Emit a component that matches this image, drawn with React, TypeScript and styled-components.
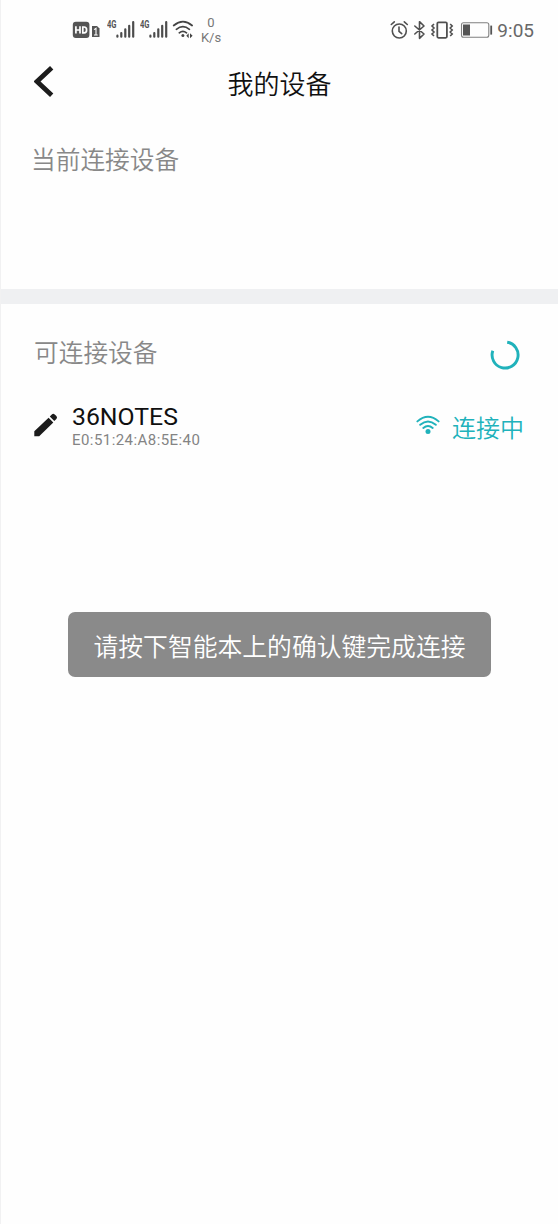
import React from "react";
import styled, { createGlobalStyle } from "styled-components";

const GlobalStyle = createGlobalStyle`
  * { box-sizing: border-box; }
  body { margin: 0; background: #fefefe; }
`;

const cjk = `"Noto Sans CJK SC", sans-serif`;
const teal = "#20b2bb";

const Screen = styled.main`
  width: 558px;
  height: 1224px;
  display: flex;
  flex-direction: column;
  background: #fefefe;
  border-left: 1px solid #f1f1f2;
  font-family: Roboto, ${cjk};
  position: relative;
  overflow: hidden;
`;

const StatusBar = styled.div`
  height: 56px;
  padding: 0 24px 0 71px;
  display: flex;
  justify-content: space-between;
  align-items: flex-start;
  color: #555;
  svg { display: block; flex: none; }
`;

const StatusGroup = styled.div<{ $top: number }>`
  display: flex;
  align-items: flex-start;
  padding-top: ${(p) => p.$top}px;
`;

const WifiSlot = styled.div`
  margin-left: 4px;
`;

const Speed = styled.div`
  width: 24px;
  margin: -5px 0 0 5px;
  font-size: 13px;
  line-height: 15px;
  text-align: center;
  color: #777;
`;

const Clock = styled.div`
  margin-left: 4px;
  padding-top: 1px;
  font-size: 19px;
  line-height: 22px;
  color: #686868;
`;

const Header = styled.header`
  height: 54px;
  padding: 0 33px;
  display: grid;
  grid-template-columns: 60px 1fr 60px;
  align-items: center;
`;

const BackButton = styled.button`
  width: 24px;
  height: 34px;
  margin-bottom: 4px;
  padding: 0;
  border: 0;
  background: none;
  svg { display: block; }
`;

const Title = styled.h1`
  margin: 0;
  text-align: center;
  font: 350 26px/36px ${cjk};
  color: #101010;
`;

const Section = styled.section<{ $height?: number; $top: number; $left: number }>`
  height: ${(p) => (p.$height ? `${p.$height}px` : "auto")};
  padding: ${(p) => p.$top}px 34px 0 ${(p) => p.$left}px;
`;

const SectionHead = styled.div`
  display: flex;
  justify-content: space-between;
  align-items: center;
  height: 36px;
`;

const SectionTitle = styled.h2`
  margin: 0;
  font: 350 24.7px/36px ${cjk};
  color: #888;
`;

const Divider = styled.div`
  height: 15px;
  background: #eff0f2;
`;

const Spinner = styled.svg`
  display: block;
  margin: 7px 4px 0 0;
`;

const DeviceRow = styled.div`
  margin-top: 31px;
  display: flex;
  align-items: center;
  height: 50px;
`;

const DeviceInfo = styled.div`
  margin-left: 14px;
  padding-top: 2px;
  flex: 1;
`;

const DeviceName = styled.div`
  font-size: 24.8px;
  line-height: 27px;
  color: #101010;
`;

const DeviceAddress = styled.div`
  margin-top: 1px;
  font-size: 15px;
  line-height: 18px;
  letter-spacing: 0.44px;
  color: #848484;
`;

const DeviceState = styled.div`
  display: flex;
  align-items: center;
  gap: 12px;
  padding-top: 2px;
  color: ${teal};
`;

const StateLabel = styled.span`
  padding-top: 1px;
  font: 350 24px/36px ${cjk};
`;

const Toast = styled.div`
  position: absolute;
  left: 67px;
  top: 612px;
  width: 423px;
  height: 65px;
  border-radius: 7px;
  background: #8a8a8a;
  color: #fff;
  text-align: center;
  white-space: nowrap;
  font: 350 24.8px/66px ${cjk};
`;

const HdIcon = () => (
  <svg width="30" height="20" viewBox="72 20 30 20">
    <rect x="72.8" y="21.8" width="16.6" height="16.2" rx="3" fill="#555" />
    <path d="M75.9 26.2v7.4M80 26.2v7.4M76 30h4M82.8 27v5.8h1.3q2.5 0 2.5-2.9t-2.5-2.9z" fill="none" stroke="#fff" strokeWidth="1.7" />
    <path d="M92 26h5l2.5 2.5V37H92z" fill="#555" />
    <path d="M94 29.6l2-1.3V35M94 35h3.7" fill="none" stroke="#fff" strokeWidth="1.1" />
  </svg>
);

const SignalLabel = styled.span`
  width: 9px;
  font: 700 10px/10px Roboto, sans-serif;
  color: #555;
  transform: scaleX(0.76);
  transform-origin: left;
`;

const Signal = styled.div<{ $gap: number }>`
  display: flex;
  margin-left: ${(p) => p.$gap}px;
`;

const SignalIndicator = ({ gap }: { gap: number }) => (
  <Signal $gap={gap}>
    <SignalLabel>4G</SignalLabel>
    <svg width="19" height="20" viewBox="0 0 19 20">
      <path d="M1.4 15.7V16.7M5.3 13V16.7M9.3 9.3V16.7M13.2 5.8V16.7M17.2 2V16.7" stroke="#4c4c4c" strokeWidth="2.2" strokeLinecap="round" />
    </svg>
  </Signal>
);

const StatusWifi = () => (
  <svg width="22" height="20" viewBox="172 20 22 20" fill="none" stroke="#444">
    <path d="M173.7 25.5q9.3-7.6 18.4 0M176.4 29.3q6.5-5.3 13 0M179.3 32.8q3.6-2.9 7.2 0" strokeWidth="1.7" strokeLinecap="round" />
    <circle cx="182.9" cy="35.6" r="1.5" fill="#444" stroke="none" />
    <path d="M188.7 33.2v5l-2.4-2.5zM190 33.2v5l2.6-2.5z" fill="#444" stroke="none" />
  </svg>
);

const AlarmIcon = () => (
  <svg width="20" height="22" viewBox="389 19 20 22" fill="none" stroke="#505050" strokeWidth="1.6" strokeLinecap="round">
    <circle cx="399.3" cy="31" r="7" />
    <path d="M399 27v4.3l2.7 2.4M391.3 24.5l3-2.7M407.3 24.5l-3-2.7" />
  </svg>
);

const BluetoothIcon = () => (
  <svg width="20" height="22" viewBox="409 19 20 22" fill="none" stroke="#505050" strokeWidth="1.6" strokeLinejoin="round" strokeLinecap="round">
    <path d="M414.8 26l9.2 8-4.5 4.3V21.7l4.5 4.3-9.2 8" />
  </svg>
);

const VibrateIcon = () => (
  <svg width="30" height="22" viewBox="429 19 30 22" fill="none" stroke="#505050" strokeWidth="1.8">
    <rect x="437.3" y="22.3" width="9.6" height="15.5" rx="1.2" />
    <path d="M434 24l-2 2 2 2-2 2 2 2-2 2 2 2M450.2 24l2 2-2 2 2 2-2 2 2 2-2 2" strokeWidth="1.6" />
  </svg>
);

const BatteryIcon = () => (
  <svg width="34" height="22" viewBox="459 19 34 22">
    <rect x="461.5" y="22.7" width="27.3" height="14.6" rx="2" fill="none" stroke="#808080" strokeWidth="1.1" />
    <rect x="463" y="24.5" width="7" height="11" fill="#555" />
    <rect x="490.3" y="25.6" width="1.8" height="9" fill="#555" />
  </svg>
);

const PencilIcon = () => (
  <svg width="24" height="26" viewBox="34 412 24 26" fill="#1c1c1c">
    <path d="M34.3 436.2v-5L48.6 417.7l4.7 4.7L39.2 436.2zM49.8 416.6l2-2.2q1.5-1.3 2.9 0l1.7 1.7q1.3 1.4 0 2.8l-2.1 2.2z" />
  </svg>
);

const WifiIcon = () => (
  <svg width="24" height="24" viewBox="416 414 24 24" fill="none" stroke={teal} strokeWidth="1.9" strokeLinecap="round">
    <path d="M417.4 421.4q10.6-9.4 21.2 0M420.2 424.8q7.8-6.8 15.6 0M423.3 428q4.7-4 9.4 0" />
    <circle cx="428" cy="431.6" r="2.5" fill={teal} stroke="none" />
  </svg>
);

export default function App() {
  return (
    <>
      <GlobalStyle />
      <Screen>
        <StatusBar>
          <StatusGroup $top={20}>
            <HdIcon />
            <SignalIndicator gap={4.5} />
            <SignalIndicator gap={5.5} />
            <WifiSlot>
              <StatusWifi />
            </WifiSlot>
            <Speed>0<br />K/s</Speed>
          </StatusGroup>
          <StatusGroup $top={19}>
            <AlarmIcon />
            <BluetoothIcon />
            <VibrateIcon />
            <BatteryIcon />
            <Clock>9:05</Clock>
          </StatusGroup>
        </StatusBar>
        <Header>
          <BackButton aria-label="返回">
            <svg width="24" height="34" viewBox="34 64 24 34">
              <path d="M51.7 67.7L37 81.5l14.7 13.8" fill="none" stroke="#1c1c1c" strokeWidth="4.8" />
            </svg>
          </BackButton>
          <Title>我的设备</Title>
        </Header>
        <Section $height={179} $top={30} $left={30}>
          <SectionTitle>当前连接设备</SectionTitle>
        </Section>
        <Divider />
        <Section $top={29} $left={33}>
          <SectionHead>
            <SectionTitle>可连接设备</SectionTitle>
            <Spinner width="30" height="30" viewBox="0 0 30 30">
              <path d="M17.2 2.2A13 13 0 1 1 2.8 10.8" fill="none" stroke={teal} strokeWidth="2.9" />
            </Spinner>
          </SectionHead>
          <DeviceRow>
            <PencilIcon />
            <DeviceInfo>
              <DeviceName>36NOTES</DeviceName>
              <DeviceAddress>E0:51:24:A8:5E:40</DeviceAddress>
            </DeviceInfo>
            <DeviceState>
              <WifiIcon />
              <StateLabel>连接中</StateLabel>
            </DeviceState>
          </DeviceRow>
        </Section>
        <Toast role="status">请按下智能本上的确认键完成连接</Toast>
      </Screen>
    </>
  );
}
